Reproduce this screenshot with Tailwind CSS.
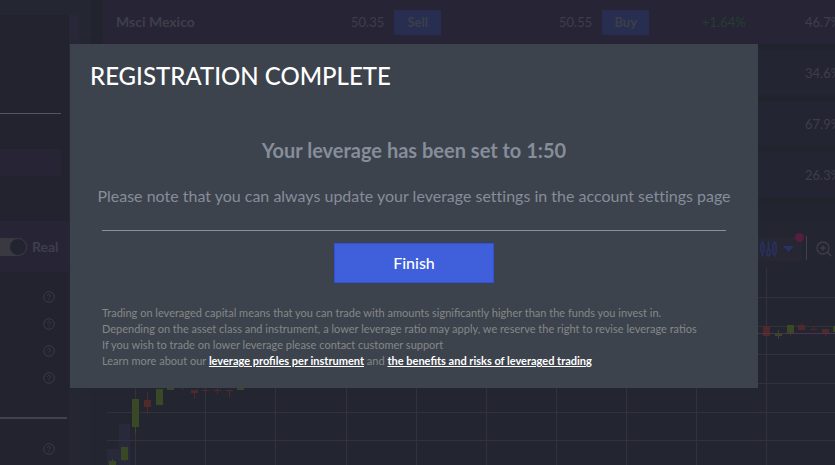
<!DOCTYPE html>
<html lang="en">
<head>
    <meta charset="UTF-8">
    <meta name="viewport" content="width=device-width, initial-scale=1.0">
    <title>Registration Complete</title>
    <script src="https://cdn.jsdelivr.net/npm/@tailwindcss/browser@4"></script>
</head>
<body class="bg-[#22242f] font-[Lato,sans-serif] h-screen overflow-hidden">
    <!-- Trading page -->
    <div class="flex h-full text-[#3e3e4a]">
        <!-- Sidebar -->
        <aside class="w-[69px] shrink-0 bg-[#22232e]">
            <div class="h-[15px] bg-[#242631]"></div>
            <div class="h-[98px]"></div>
            <div class="mr-2 h-px bg-[#55555f]"></div>
            <div class="mt-[35px] mr-2 h-[27px] bg-[#272535]"></div>
            <div class="mt-[45px] h-[51px] bg-[#272535] flex items-center overflow-hidden">
                <input type="checkbox" id="realMode" checked class="appearance-none shrink-0 -ml-[15px] w-[42px] h-[18px] rounded-full bg-[#3a3941] flex justify-end after:block after:content-[''] after:size-[18px] after:rounded-full after:bg-[#222430] after:border after:border-[#3a3941]">
                <label for="realMode" class="ml-[5px] text-[14px] font-bold">Real</label>
            </div>
            <div class="mt-[11px] pr-[14px] flex flex-col items-end text-[#3b3b47]">
                <button aria-label="Help" class="h-[27px]"><svg class="size-3" viewBox="0 0 12 12" fill="none" stroke="currentColor"><circle cx="6" cy="6" r="5.3"/><path d="M4.5 4.8a1.5 1.5 0 1 1 2.3 1.3c-.5.3-.8.5-.8 1.1M6 8.2v1"/></svg></button>
                <button aria-label="Help" class="h-[27px]"><svg class="size-3" viewBox="0 0 12 12" fill="none" stroke="currentColor"><circle cx="6" cy="6" r="5.3"/><path d="M4.5 4.8a1.5 1.5 0 1 1 2.3 1.3c-.5.3-.8.5-.8 1.1M6 8.2v1"/></svg></button>
                <button aria-label="Help" class="h-[27px]"><svg class="size-3" viewBox="0 0 12 12" fill="none" stroke="currentColor"><circle cx="6" cy="6" r="5.3"/><path d="M4.5 4.8a1.5 1.5 0 1 1 2.3 1.3c-.5.3-.8.5-.8 1.1M6 8.2v1"/></svg></button>
                <button aria-label="Help" class="h-[27px]"><svg class="size-3" viewBox="0 0 12 12" fill="none" stroke="currentColor"><circle cx="6" cy="6" r="5.3"/><path d="M4.5 4.8a1.5 1.5 0 1 1 2.3 1.3c-.5.3-.8.5-.8 1.1M6 8.2v1"/></svg></button>
            </div>
            <div class="mt-[26px] mr-0.5 h-0.5 bg-[#42414c]"></div>
            <div class="mt-4 pr-[14px] flex flex-col items-end text-[#3b3b47]">
                <button aria-label="Help" class="h-[27px]"><svg class="size-3" viewBox="0 0 12 12" fill="none" stroke="currentColor"><circle cx="6" cy="6" r="5.3"/><path d="M4.5 4.8a1.5 1.5 0 1 1 2.3 1.3c-.5.3-.8.5-.8 1.1M6 8.2v1"/></svg></button>
            </div>
        </aside>
        <!-- Scroll track -->
        <div class="w-[10px] shrink-0 pt-[15px] bg-[#242631]">
            <div class="h-[250px] bg-[#272738]"></div>
        </div>
        <div class="w-3 shrink-0 bg-[#242631]"></div>

        <!-- Main -->
        <main class="flex-1 min-w-0 flex flex-col overflow-hidden">
            <div class="pl-3 bg-[#21232d]">
                <table class="w-full table-fixed border-separate border-spacing-0 text-[13px] leading-5 whitespace-nowrap">
                    <colgroup>
                        <col class="w-[235px]">
                        <col class="w-[208px]">
                        <col class="w-[156px]">
                        <col class="w-[90px]">
                        <col>
                    </colgroup>
                    <tbody class="[&_td]:border-b-6 [&_td]:border-[#21232d]">
                        <tr class="h-[50px] bg-[#272535]">
                            <td class="pl-[13px] text-[14px] font-bold">Msci Mexico</td>
                            <td class="pl-[13px]"><span class="mr-[10px]">50.35</span><button class="w-[47px] h-[25px] bg-[#272e50] border border-[#262c57] font-bold">Sell</button></td>
                            <td class="pl-[13px]"><span class="mr-[10px]">50.55</span><button class="w-[47px] h-[25px] bg-[#272e50] border border-[#262c57] font-bold">Buy</button></td>
                            <td class="text-[#243f31]">+1.64%</td>
                            <td class="pl-[13px]">46.7%</td>
                        </tr>
                        <tr class="h-[51px] bg-[#242532]">
                            <td colspan="4"></td>
                            <td class="pl-[13px]">34.6%</td>
                        </tr>
                        <tr class="h-[51px] bg-[#242532]">
                            <td colspan="4"></td>
                            <td class="pl-[13px]">67.9%</td>
                        </tr>
                        <tr class="h-[51px] bg-[#242532]">
                            <td colspan="4"></td>
                            <td class="pl-[13px]">26.3%</td>
                        </tr>
                    </tbody>
                </table>
            </div>

            <!-- Chart toolbar -->
            <div class="mt-[17px] h-[48px] pt-[11px] pl-[658px] bg-[#232530] flex items-start">
                <div class="flex w-[54px] shrink-0 relative">
                    <button aria-label="Chart type" class="w-[53px] h-6 mt-[6px] pl-[11px] bg-[#262733] flex items-center gap-[6px] text-[#283265]">
                        <svg class="w-[17px] h-4 shrink-0" viewBox="0 0 17 16" fill="none" stroke="currentColor" stroke-width="1.5"><path d="M2.5 0v3M2.5 11v4M8.5 0v8M8.5 14.500v1.500M14.500 0v2M14.500 12.500v3"/><rect x="1" y="3" width="3" height="8" rx="1"/><rect x="7" y="8.500" width="3" height="6" rx="1"/><rect x="13" y="2" width="3" height="11" rx="1"/></svg>
                        <svg class="w-[11px] h-[6px] shrink-0" viewBox="0 0 11 6" fill="currentColor"><path d="M0 0h11L5.5 6z"/></svg>
                    </button>
                    <span class="absolute right-[-1px] top-[2px] size-[9px] rounded-full bg-[#561d42]"></span>
                </div>
                <div class="mt-[5px] ml-[3px] w-px h-6 shrink-0 bg-[#42414a]"></div>
                <button aria-label="Zoom in" class="mt-[10px] ml-[9px] shrink-0 text-[#3e3e49]">
                    <svg class="size-4" viewBox="0 0 16 16" fill="none" stroke="currentColor" stroke-width="1.3"><circle cx="7" cy="7" r="6"/><path d="M11.3 11.3L15.3 15.3M7 4.3v5.4M4.3 7h5.4"/></svg>
                </button>
            </div>

            <!-- Chart -->
            <svg class="w-full flex-1 bg-[#232530]">
                <path fill="#282a3c" d="M16 181h12v20H16zM28 156h11v45H28z"/>
                <g fill="none" stroke="#31323d">
                    <path d="M16 29.5H2000M16 58.5H2000M16 86.5H2000M16 115.5H2000M16 144.5H2000M16 172.5H2000"/>
                    <path d="M44.5 0V600M114.5 0V600M184.5 0V600M255.5 0V600M325.5 0V600M395.5 0V600M465.5 0V600M535.5 0V600M605.5 0V600M675.5 0V600"/>
                </g>
                <g fill="#394925">
                    <path d="M18 193h7v10h-7zM21 191h1v2h-1zM30 179h7v13h-7zM33 192h1v1h-1zM41 131h7v28h-7zM44 159h1v6h-1zM65 121h7v16h-7zM76 114h7v8h-7zM146 114h7v8h-7z"/>
                    <path d="M684 66h7v2h-7zM687 62h1v9h-1zM696 57h7v9h-7zM699 66h1v1h-1zM742 58h7v6h-7z"/>
                </g>
                <g fill="#502a2b">
                    <path d="M53 132h7v7h-7zM56 124h1v22h-1zM88 114h7v6h-7zM91 114h1v8h-1zM100 122h7v3h-7zM103 122h1v9h-1zM111 122h7v1h-7zM114 122h1v4h-1zM123 122h7v1h-7zM126 119h1v7h-1zM135 122h7v1h-7zM138 122h1v7h-1z"/>
                    <path d="M672 58h7v10h-7zM707 57h7v5h-7zM710 55h1v2h-1zM719 61h7v1h-7zM722 59h1v3h-1zM731 61h7v4h-7zM734 65h1v3h-1z"/>
                </g>
                <path d="M16 65.5H2000" stroke="#50304d" fill="none"/>
            </svg>
        </main>
    </div>

    <!-- Registration dialog -->
    <div class="fixed inset-0 pt-11 pl-[70px] pr-[77px]">
        <div role="dialog" aria-labelledby="dialogTitle" class="bg-[#3d434c] pt-4 pb-[19px] px-8">
            <h1 id="dialogTitle" class="-ml-3 text-[24px] leading-8 font-medium text-white">REGISTRATION COMPLETE</h1>
            <h2 class="mt-11 text-[20px] leading-7 font-bold text-center text-[#868d9b]">Your leverage has been set to 1:50</h2>
            <p class="-mx-2 mt-5 text-[16px] leading-6 text-center text-[#868d9b] [font-variant-ligatures:none]">Please note that you can always update your leverage settings in the account settings page</p>
            <hr class="mt-[22px] border-[#918f8f]">
            <button class="block mx-auto mt-3 w-[160px] h-10 bg-[#4060db] border border-[#2f52dd] text-[16px] font-medium text-white">Finish</button>
            <div class="mt-[22px] text-[11px] leading-4 text-[#868789]">
                <p>Trading on leveraged capital means that you can trade with amounts significantly higher than the funds you invest in.</p>
                <p>Depending on the asset class and instrument, a lower leverage ratio may apply, we reserve the right to revise leverage ratios</p>
                <p>If you wish to trade on lower leverage please contact customer support</p>
                <p>Learn more about our <a href="#" class="font-bold underline text-white">leverage profiles per instrument</a> and <a href="#" class="font-bold underline text-white">the benefits and risks of leveraged trading</a></p>
            </div>
        </div>
    </div>
</body>
</html>
